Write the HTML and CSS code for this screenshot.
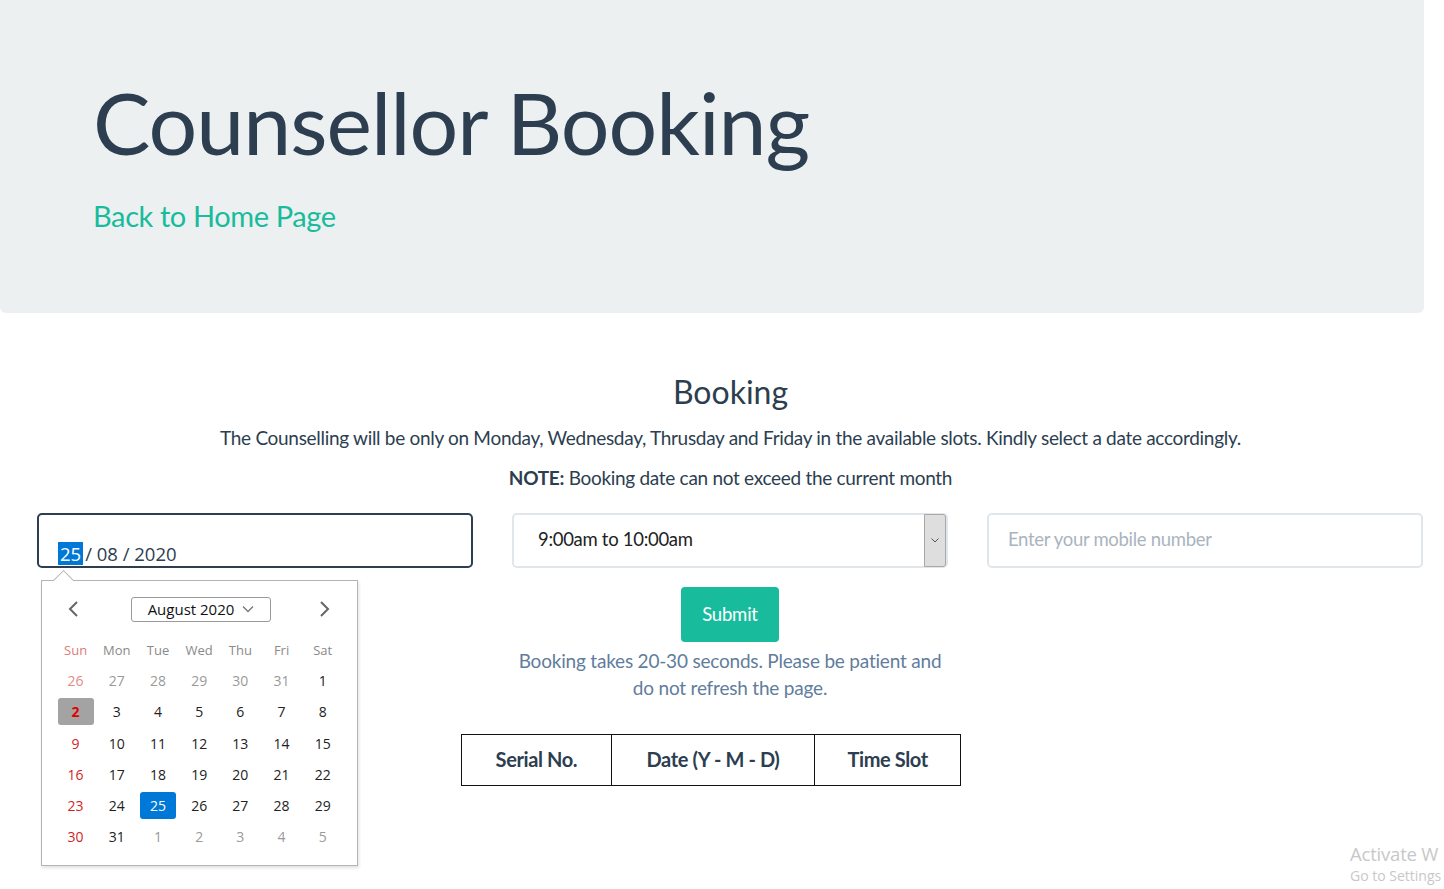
FILE: index.html
```html
<!DOCTYPE html>
<html lang="en">
<head>
<meta charset="utf-8">
<title>Counsellor Booking</title>
<link rel="stylesheet" href="styles.css">
</head>
<body>
<header class="jumbotron">
  <h1 class="title">Counsellor Booking</h1>
  <a class="home-link" href="#">Back to Home Page</a>
</header>

<main class="booking">
  <h2 class="booking-title">Booking</h2>
  <p class="info">The Counselling will be only on Monday, Wednesday, Thrusday and Friday in the available slots. Kindly select a date accordingly.</p>
  <p class="note"><b>NOTE:</b> Booking date can not exceed the current month</p>

  <div class="form-row">
    <div class="col date-col">
      <div class="date-input"><span class="sel">25</span>/ 08 / 2020</div>
      <div class="calendar">
        <div class="cal-head">
          <svg class="nav" width="14" height="18" viewBox="0 0 14 18"><path d="M10 2 L3 9 L10 16" fill="none" stroke="#666" stroke-width="2"/></svg>
          <div class="month-box">August 2020 <svg width="12" height="8" viewBox="0 0 12 8"><path d="M1 1.5 L6 6.5 L11 1.5" fill="none" stroke="#777" stroke-width="1.3"/></svg></div>
          <svg class="nav" width="14" height="18" viewBox="0 0 14 18"><path d="M4 2 L11 9 L4 16" fill="none" stroke="#666" stroke-width="2"/></svg>
        </div>
        <div class="cal-grid">
          <span class="wd sun">Sun</span><span class="wd">Mon</span><span class="wd">Tue</span><span class="wd">Wed</span><span class="wd">Thu</span><span class="wd">Fri</span><span class="wd">Sat</span>
          <span class="d sun other">26</span><span class="d other">27</span><span class="d other">28</span><span class="d other">29</span><span class="d other">30</span><span class="d other">31</span><span class="d">1</span>
          <span class="d sun today"><i>2</i></span><span class="d">3</span><span class="d">4</span><span class="d">5</span><span class="d">6</span><span class="d">7</span><span class="d">8</span>
          <span class="d sun">9</span><span class="d">10</span><span class="d">11</span><span class="d">12</span><span class="d">13</span><span class="d">14</span><span class="d">15</span>
          <span class="d sun">16</span><span class="d">17</span><span class="d">18</span><span class="d">19</span><span class="d">20</span><span class="d">21</span><span class="d">22</span>
          <span class="d sun">23</span><span class="d">24</span><span class="d picked"><i>25</i></span><span class="d">26</span><span class="d">27</span><span class="d">28</span><span class="d">29</span>
          <span class="d sun">30</span><span class="d">31</span><span class="d other">1</span><span class="d other">2</span><span class="d other">3</span><span class="d other">4</span><span class="d other">5</span>
        </div>
      </div>
    </div>

    <div class="col mid-col">
      <div class="select">
        <span class="select-text">9:00am to 10:00am</span>
        <span class="dd"><svg width="8" height="5" viewBox="0 0 8 5"><path d="M0.5 0.5 L4 4 L7.5 0.5" fill="none" stroke="#555" stroke-width="1"/></svg></span>
      </div>
      <button class="submit">Submit</button>
      <p class="wait">Booking takes 20-30 seconds. Please be patient and do not refresh the page.</p>
    </div>

    <div class="col">
      <input class="phone" type="text" placeholder="Enter your mobile number">
    </div>
  </div>

  <table class="slots">
    <tr>
      <th class="c1">Serial No.</th>
      <th class="c2">Date (Y - M - D)</th>
      <th class="c3">Time Slot</th>
    </tr>
  </table>
</main>

<div class="activate">
  <div class="a1">Activate W</div>
  <div class="a2">Go to Settings</div>
</div>
</body>
</html>
```

FILE: styles.css
```css
* { box-sizing: border-box; }

html, body {
  margin: 0;
  padding: 0;
  width: 1444px;
  height: 889px;
  overflow: hidden;
  background: #fff;
  font-family: Lato, "Open Sans", sans-serif;
  color: #2c3e50;
}

body { position: relative; }

.jumbotron {
  width: 1424px;
  height: 313px;
  background: #ecf0f1;
  border-radius: 0 0 6px 6px;
  padding: 67px 0 0 93px;
}

.title {
  margin: 0;
  font-size: 86px;
  font-weight: 400;
  line-height: 110px;
  letter-spacing: -1px;
  color: #2c3e50;
}

.home-link {
  display: inline-block;
  margin-top: 21px;
  font-size: 29px;
  color: #18bc9c;
  text-decoration: none;
  letter-spacing: -0.4px;
}

.booking {
  padding: 56px 0 0 37px;
  width: 1424px;
}

.booking-title {
  margin: 0;
  text-align: center;
  font-size: 32px;
  font-weight: 400;
  line-height: 46px;
}

.info {
  margin: 10px 0 0;
  text-align: center;
  font-size: 19px;
  line-height: 26px;
  letter-spacing: -0.3px;
}

.note {
  margin: 14px 0 0;
  text-align: center;
  font-size: 19px;
  line-height: 26px;
  letter-spacing: -0.3px;
}

.form-row {
  display: flex;
  gap: 39px;
  margin-top: 22px;
}

.col {
  width: 436px;
  position: relative;
}

.mid-col {
  display: flex;
  flex-direction: column;
  align-items: center;
}

.date-input {
  height: 55px;
  border: 2px solid #2c3e50;
  border-radius: 5px;
  padding: 27px 0 0 19px;
  font-family: "Open Sans", sans-serif;
  font-size: 18.5px;
  line-height: 23px;
  color: #2c3e50;
}

.sel {
  display: inline-block;
  background: #0078d7;
  color: #fff;
  padding: 0 2px;
  margin-right: 2px;
}

.calendar {
  position: absolute;
  left: 4px;
  top: 67px;
  width: 317px;
  height: 286px;
  background: #fff;
  border: 1px solid #b4b4b4;
  box-shadow: 1px 2px 3px rgba(0,0,0,0.12);
  padding: 15px 14px 0 13px;
  font-family: "Open Sans", sans-serif;
  z-index: 2;
}

.calendar::before {
  content: "";
  position: absolute;
  left: 14px;
  top: -8px;
  width: 14px;
  height: 14px;
  background: #fff;
  border-left: 1px solid #b4b4b4;
  border-top: 1px solid #b4b4b4;
  transform: rotate(45deg);
}

.cal-head {
  display: flex;
  align-items: center;
  justify-content: space-between;
  height: 26px;
  padding: 0 12px 0 12px;
}

.month-box {
  width: 140px;
  height: 25px;
  border: 1px solid #9a9a9a;
  border-radius: 3px;
  display: flex;
  align-items: center;
  justify-content: center;
  gap: 8px;
  font-size: 15px;
  color: #111;
  margin-left: 4px;
}

.cal-grid {
  display: grid;
  grid-template-columns: repeat(7, 41.2px);
  grid-auto-rows: 31.2px;
  margin-top: 12px;
}

.cal-grid span {
  display: flex;
  align-items: center;
  justify-content: center;
  font-size: 14px;
  color: #222;
}

.cal-grid .wd {
  color: #8a8a8a;
  font-size: 13px;
}

.cal-grid .wd.sun { color: #e07a7a; }
.cal-grid .d.sun { color: #d11f1f; }
.cal-grid .d.other { color: #9a9a9a; }
.cal-grid .d.sun.other { color: #e48a8a; }

.cal-grid i {
  font-style: normal;
  width: 36px;
  height: 27px;
  border-radius: 3px;
  display: flex;
  align-items: center;
  justify-content: center;
}

.cal-grid .today i {
  background: #a3a3a3;
  color: #e00000;
  font-weight: 700;
}

.cal-grid .picked i {
  background: #0078d7;
  color: #fff;
}

.select {
  width: 436px;
  height: 55px;
  border: 2px solid #e1e6eb;
  border-radius: 5px;
  display: flex;
  align-items: center;
  justify-content: space-between;
  padding-left: 24px;
  font-size: 18.5px;
  letter-spacing: -0.3px;
  color: #222;
}

.select-text { margin-bottom: 4px; }

.dd {
  width: 22px;
  height: 53px;
  background: #dedede;
  border: 1px solid #a8a8a8;
  border-radius: 0 3px 3px 0;
  display: flex;
  align-items: center;
  justify-content: center;
}

.submit {
  margin-top: 19px;
  width: 98px;
  height: 55px;
  background: #18bc9c;
  border: none;
  border-radius: 4px;
  color: #fff;
  font-family: Lato, "Open Sans", sans-serif;
  font-size: 18.5px;
  letter-spacing: -0.2px;
  padding-bottom: 3px;
}

.wait {
  margin: 5px 0 0;
  width: 436px;
  text-align: center;
  font-size: 19px;
  line-height: 27px;
  color: #5f7d9c;
  letter-spacing: -0.2px;
}

.phone {
  width: 436px;
  height: 55px;
  border: 2px solid #e1e6eb;
  border-radius: 5px;
  padding: 0 0 4px 19px;
  font-family: Lato, "Open Sans", sans-serif;
  font-size: 18.5px;
  letter-spacing: -0.3px;
  color: #222;
}

.phone::placeholder { color: #a9b4bf; }

.slots {
  margin: 33px 0 0 424px;
  border-collapse: collapse;
  width: 500px;
  height: 52px;
}

.slots th {
  border: 1.5px solid #111;
  font-size: 20px;
  font-weight: 700;
  letter-spacing: -0.4px;
  color: #2c3e50;
  padding-bottom: 3px;
}

.slots .c1 { width: 150px; }
.slots .c2 { width: 204px; }
.slots .c3 { width: 146px; }

.activate {
  position: absolute;
  left: 1350px;
  top: 842px;
  color: #c8c8c8;
  font-family: "Open Sans", sans-serif;
  white-space: nowrap;
}

.activate .a1 { font-size: 18.5px; line-height: 24px; letter-spacing: -0.2px; }
.activate .a2 { font-size: 14px; line-height: 20px; }
```
